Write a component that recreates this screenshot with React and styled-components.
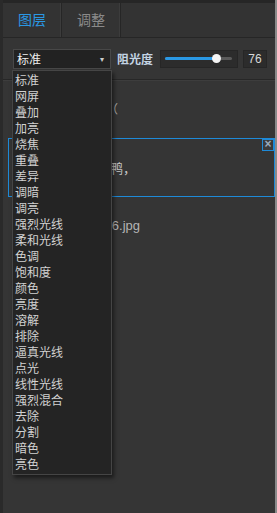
import styled, { createGlobalStyle } from "styled-components";

const GlobalStyle = createGlobalStyle`
  html, body {
    margin: 0;
    padding: 0;
    background: #353535;
  }
  * { box-sizing: border-box; }
`;

const blendModes = [
  "标准", "网屏", "叠加", "加亮", "烧焦", "重叠", "差异", "调暗", "调亮",
  "强烈光线", "柔和光线", "色调", "饱和度", "颜色", "亮度", "溶解", "排除",
  "逼真光线", "点光", "线性光线", "强烈混合", "去除", "分割", "暗色", "亮色",
];

const App = () => {
  return (
    <>
      <GlobalStyle />
      <Panel>
        <TabBar>
          <Tab active>图层</Tab>
          <Tab>调整</Tab>
        </TabBar>
        <Toolbar>
          <SelectWrap>
            <Select>
              <span>标准</span>
              <Caret>▾</Caret>
            </Select>
            <Dropdown>
              {blendModes.map((m) => (
                <Option key={m}>{m}</Option>
              ))}
            </Dropdown>
          </SelectWrap>
          <Label>阻光度</Label>
          <Slider>
            <Track>
              <Fill style={{ width: "76%" }} />
              <Thumb style={{ left: "76%" }} />
            </Track>
          </Slider>
          <Value>76</Value>
        </Toolbar>
        <Content>
          <LayerLine>文字图层（</LayerLine>
          <TextLayer>
            <LayerText>小黄鸭，</LayerText>
            <CloseBtn>×</CloseBtn>
          </TextLayer>
          <FileLine>IMG_2016.jpg</FileLine>
        </Content>
      </Panel>
    </>
  );
};

export default App;

const Panel = styled.div`
  width: 277px;
  height: 513px;
  background: #353535;
  border-left: 3px solid #2a2a2a;
  border-right: 2px solid #8a8a8a;
  font-family: "Noto Sans CJK SC", "Liberation Sans", sans-serif;
  display: flex;
  flex-direction: column;
  position: relative;
`;

const TabBar = styled.div`
  height: 38px;
  display: flex;
  border-top: 3px solid #262626;
  border-bottom: 1px solid #262626;
  background: #333;
`;

const Tab = styled.div`
  width: 59px;
  display: flex;
  align-items: center;
  justify-content: center;
  font-size: 14px;
  color: ${(p) => (p.active ? "#2a98e4" : "#8a8a8a")};
  border-right: 1px solid #262626;
  box-shadow: inset -1px 0 0 #3c3c3c;
  padding-bottom: 2px;
`;

const Toolbar = styled.div`
  height: 42px;
  display: flex;
  align-items: center;
  padding: 0 0 0 10px;
  border-bottom: 1px solid #272727;
  box-shadow: 0 1px 0 #3d3d3d;
`;

const SelectWrap = styled.div`
  position: relative;
  margin-right: 6px;
`;

const Select = styled.div`
  width: 98px;
  height: 20px;
  background: #222;
  border: 1px solid #484848;
  display: flex;
  align-items: center;
  justify-content: space-between;
  padding: 0 6px 0 3px;
  color: #eee;
  font-size: 12px;
`;

const Caret = styled.span`
  font-size: 8px;
  color: #ccc;
`;

const Dropdown = styled.div`
  position: absolute;
  top: 21px;
  left: -1px;
  width: 100px;
  background: #242424;
  border: 1px solid #454545;
  box-shadow: 2px 3px 4px rgba(0, 0, 0, 0.5);
  padding: 1px 0 2px;
  z-index: 10;
`;

const Option = styled.div`
  height: 16px;
  line-height: 16px;
  padding-left: 2px;
  font-size: 12px;
  color: #d2d2d2;
`;

const Label = styled.div`
  font-size: 12px;
  font-weight: bold;
  color: #c4d4e4;
  width: 43px;
`;

const Slider = styled.div`
  width: 78px;
  height: 18px;
  background: #2c2c2c;
  border: 1px solid #262626;
  display: flex;
  align-items: center;
  padding: 0 5px 0 4px;
`;

const Track = styled.div`
  position: relative;
  flex: 1;
  height: 3px;
  background: #5a5a5a;
  border-radius: 2px;
`;

const Fill = styled.div`
  height: 100%;
  background: #2a98e4;
  border-radius: 2px;
`;

const Thumb = styled.div`
  position: absolute;
  top: -3px;
  width: 9px;
  height: 9px;
  margin-left: -4px;
  border-radius: 50%;
  background: #f4f4f4;
`;

const Value = styled.div`
  width: 24px;
  height: 18px;
  margin-left: 5px;
  background: #2c2c2c;
  border: 1px solid #262626;
  color: #d8d8d8;
  font-family: "Liberation Sans", sans-serif;
  font-size: 12px;
  display: flex;
  align-items: center;
  justify-content: center;
`;

const Content = styled.div`
  flex: 1;
  padding: 20px 0 0 5px;
`;

const LayerLine = styled.div`
  font-size: 12px;
  color: #aaa;
  padding-left: 50px;
  height: 38px;
`;

const TextLayer = styled.div`
  position: relative;
  width: 267px;
  height: 59px;
  border: 1px solid #1e8ad8;
  display: flex;
  align-items: center;
`;

const LayerText = styled.div`
  width: 127px;
  text-align: right;
  font-size: 13px;
  color: #c8c8c8;
`;

const CloseBtn = styled.div`
  position: absolute;
  top: 0;
  right: 0;
  width: 12px;
  height: 12px;
  border: 1px solid #1e8ad8;
  background: #3a3a3a;
  color: #9ab;
  font-family: "Liberation Sans", sans-serif;
  font-size: 12px;
  font-weight: bold;
  line-height: 9px;
  text-align: center;
`;

const FileLine = styled.div`
  margin-top: 21px;
  width: 132px;
  text-align: right;
  font-size: 13px;
  color: #b4b4b4;
  font-family: "Liberation Sans", "Noto Sans CJK SC", sans-serif;
`;
